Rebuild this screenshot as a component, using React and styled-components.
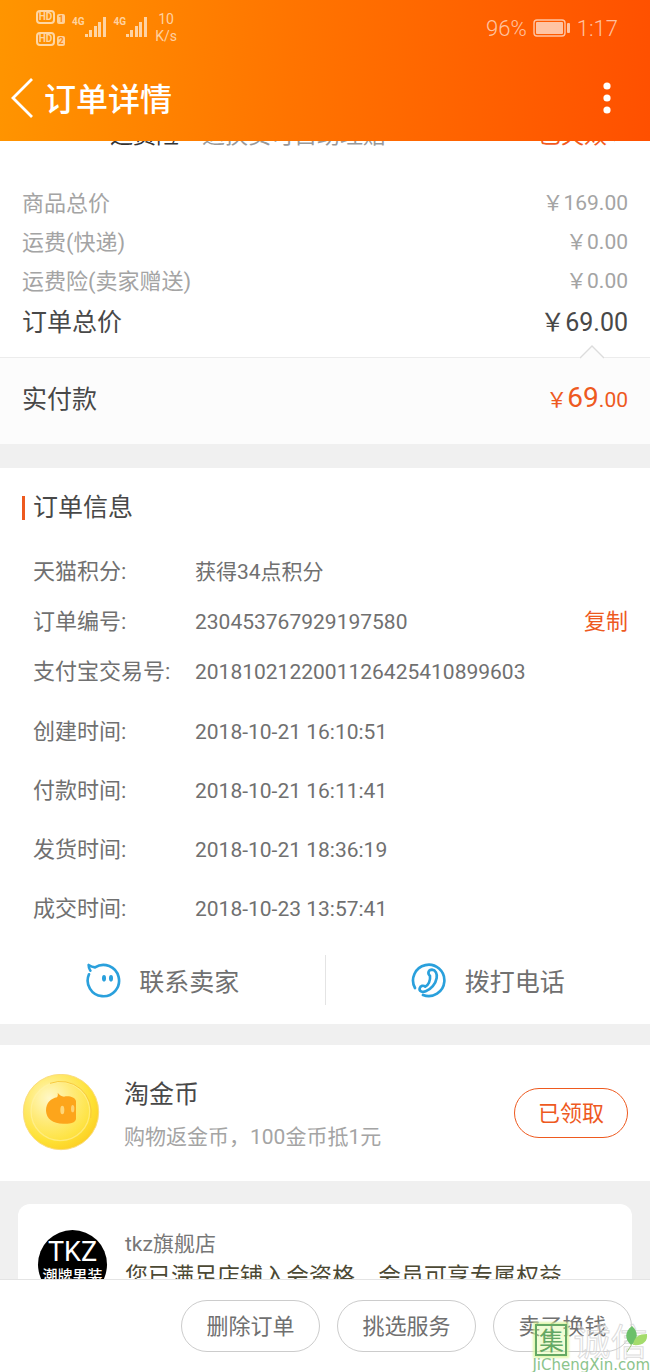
import React from 'react';
import styled, { createGlobalStyle } from 'styled-components';

const GlobalStyle = createGlobalStyle`
  * {
    box-sizing: border-box;
  }

  body {
    margin: 0;
    font-family: Roboto, "Noto Sans CJK SC", sans-serif;
    color: #484848;
    background: #f0f0f0;
  }

  button {
    font-family: inherit;
    cursor: pointer;
  }

  a {
    color: inherit;
    text-decoration: none;
  }
`;

const Page = styled.div`
  position: relative;
  height: 100vh;
  display: flex;
  flex-direction: column;
  overflow: hidden;
`;

const Header = styled.header`
  flex: none;
  background: linear-gradient(95deg, #ff9500 0%, #ff7400 45%, #ff5000 100%);
  color: #fff;
`;

const StatusBar = styled.div`
  height: 56px;
  padding: 0 32px 0 36px;
  display: flex;
  justify-content: space-between;
  align-items: center;
  color: rgba(255, 255, 255, 0.64);
`;

const StatusGroup = styled.div`
  display: flex;
  align-items: center;
  gap: ${props => props.$gap}px;
  font-size: 22px;
  font-weight: 300;
`;

const HdList = styled.div`
  display: flex;
  flex-direction: column;
  gap: 8px;
`;

const HdRow = styled.div`
  display: flex;
  align-items: flex-end;
  gap: 2px;
`;

const HdBadge = styled.span`
  width: 19px;
  height: 14px;
  border: 2px solid;
  border-radius: 4px;
  font-size: 10px;
  line-height: 10px;
  font-weight: 700;
  text-align: center;
`;

const SimBadge = styled.span`
  width: 8px;
  height: 10px;
  border-radius: 2px;
  background: rgba(255, 255, 255, 0.6);
  font-size: 9px;
  line-height: 10px;
  font-weight: 700;
  text-align: center;
  color: #ff8c10;
`;

const Signal = styled.div`
  display: flex;
  align-items: flex-start;
  font-size: 10px;
  line-height: 10px;
  font-weight: 700;
`;

const Speed = styled.div`
  font-size: 14px;
  line-height: 17px;
  font-weight: 400;
  text-align: center;
`;

const NavBar = styled.div`
  height: 85px;
  padding: 0 28px 0 8px;
  display: flex;
  align-items: center;
`;

const IconButton = styled.button`
  padding: 0;
  border: 0;
  background: none;
  display: flex;
`;

const NavTitle = styled.h1`
  flex: 1;
  margin: 0 0 0 8px;
  padding-top: 2px;
  font-size: 32px;
  line-height: 40px;
  font-weight: 500;
`;

const Content = styled.main`
  flex: 1;
  min-height: 0;
  overflow: hidden;
`;

const Section = styled.section`
  background: #fff;
  margin-bottom: ${props => props.$gap}px;
`;

const InsuranceRow = styled.div`
  height: 10px;
  padding: 0 28px 0 110px;
  overflow: hidden;
  display: flex;
  align-items: flex-end;
  font-size: 23px;
  line-height: 30px;
  color: #333;
`;

const InsuranceNote = styled.span`
  flex: 1;
  margin-left: 23px;
  color: #999;
`;

const InsuranceState = styled.span`
  display: flex;
  align-items: center;
  gap: 6px;
  color: #f25a1d;
`;

const Prices = styled.dl`
  margin: 0;
  padding: 33px 22px 12px;
`;

const PriceRow = styled.div`
  display: flex;
  justify-content: space-between;
  align-items: center;
  font-size: ${props => (props.$total ? 25 : 22)}px;
  line-height: ${props => (props.$total ? 44 : 39)}px;
  color: ${props => (props.$total ? '#484848' : '#a4a4a4')};
`;

const PriceValue = styled.dd`
  margin: 0;
  font-size: ${props => (props.$total ? 25 : 21)}px;
`;

const Paid = styled.div`
  position: relative;
  height: 87px;
  padding: 0 22px 8px;
  border-top: 1px solid #ececec;
  background: #fcfcfc;
  display: flex;
  justify-content: space-between;
  align-items: center;
  font-size: 25px;
`;

const PaidArrow = styled.svg`
  position: absolute;
  top: -13px;
  right: 46px;
`;

const PaidAmount = styled.strong`
  font-size: 21px;
  font-weight: 400;
  color: #ee5a1f;
`;

const PaidInteger = styled.span`
  font-size: 28px;
`;

const SectionTitle = styled.h2`
  margin: 0;
  padding: 26px 22px 26px;
  display: flex;
  align-items: center;
  gap: 8px;
  font-size: 25px;
  line-height: 27px;
  font-weight: 400;

  &::before {
    content: '';
    width: 3px;
    height: 24px;
    background: #ee5a1f;
  }
`;

const InfoList = styled.dl`
  margin: 0;
  padding: 0 22px 0 33px;

  & + & {
    padding-top: 5px;
  }
`;

const InfoRow = styled.div`
  height: ${props => props.$height}px;
  display: flex;
  align-items: center;
  line-height: 28px;
  color: #707070;
`;

const InfoLabel = styled.dt`
  width: 162px;
  font-size: 22px;
  white-space: nowrap;
`;

const InfoValue = styled.dd`
  flex: 1;
  margin: 0;
  font-size: 21px;
`;

const CopyButton = styled.button`
  padding: 0;
  border: 0;
  background: none;
  font-size: 22px;
  line-height: 28px;
  color: #ee5a1f;
`;

const Contacts = styled.div`
  height: 86px;
  padding-bottom: 2px;
  display: flex;
  align-items: center;
`;

const ContactLink = styled.a`
  flex: 1;
  height: 50px;
  display: flex;
  justify-content: center;
  align-items: center;
  gap: 18px;
  font-size: 25px;
  color: #707070;

  & + & {
    border-left: 1px solid #e4e4e4;
  }
`;

const CoinRow = styled.div`
  height: 136px;
  padding: 0 22px;
  display: flex;
  align-items: center;
  gap: 24px;
`;

const CoinText = styled.div`
  flex: 1;
  padding-top: 6px;
`;

const CoinName = styled.div`
  font-size: 25px;
  line-height: 42px;
`;

const CoinNote = styled.div`
  font-size: 21px;
  line-height: 42px;
  color: #a4a4a4;
`;

const PillButton = styled.button`
  min-width: ${props => (props.$accent ? 114 : 139)}px;
  height: ${props => (props.$accent ? 50 : 52)}px;
  padding: 0 20px 4px;
  border: 1px solid ${props => (props.$accent ? '#ee5a1f' : '#ccc')};
  border-radius: 26px;
  background: #fff;
  font-size: 22px;
  color: ${props => (props.$accent ? '#ee5a1f' : '#707070')};
`;

const ShopCard = styled.a`
  margin: 0 18px;
  padding: 26px 20px;
  border-radius: 12px;
  background: #fff;
  display: flex;
  gap: 18px;
`;

const ShopLogo = styled.div`
  flex: none;
  width: 69px;
  height: 69px;
  padding-top: 8px;
  border-radius: 50%;
  overflow: hidden;
  background: #000;
  color: #fff;
  text-align: center;
  font-size: 15px;
  line-height: 20px;
  font-weight: 500;
  white-space: nowrap;
`;

const ShopLogoName = styled.div`
  font-size: 27px;
  line-height: 28px;
  font-weight: 400;
`;

const ShopName = styled.div`
  font-size: 21px;
  line-height: 28px;
  color: #777;
`;

const ShopNote = styled.div`
  font-size: 23px;
  line-height: 38px;
  color: #4c4934;
`;

const Footer = styled.footer`
  flex: none;
  height: 93px;
  padding: 0 18px;
  border-top: 1px solid #e4e4e4;
  background: #fff;
  display: flex;
  justify-content: flex-end;
  align-items: center;
  gap: 17px;
`;

const Watermark = styled.div`
  position: absolute;
  right: 0;
  bottom: 0;
  pointer-events: none;
  font-family: "DejaVu Sans", sans-serif;
  font-size: 15px;
  line-height: 14px;
  color: #8cc48c;
`;

const WatermarkTop = styled.div`
  padding-left: 3px;
  display: flex;
  align-items: center;
  gap: 6px;
  font-family: "Noto Sans CJK SC", sans-serif;
  font-size: 37px;
  line-height: 36px;
`;

const WatermarkSeal = styled.span`
  width: 32px;
  height: 32px;
  border: 2px solid #64a864;
  box-shadow: 0 0 2px 2px rgba(217, 245, 154, 0.8);
  background: rgba(217, 250, 150, 0.4);
  font-size: 25px;
  line-height: 26px;
  text-align: center;
  color: #64a864;
`;

const WatermarkName = styled.span`
  color: rgba(255, 255, 255, 0.3);
  -webkit-text-stroke: 1px rgba(205, 205, 205, 0.7);
`;

const WatermarkLeaf = styled.svg`
  position: absolute;
  top: 3px;
  right: 1px;
`;

const SignalBars = () => (
  <svg width="22" height="22" viewBox="0 0 22 22" fill="currentColor">
    <rect x="0" y="17" width="3" height="3" />
    <rect x="4" y="13" width="3" height="7" />
    <rect x="9" y="9" width="3" height="11" />
    <rect x="13" y="5" width="3" height="15" />
    <rect x="18" y="0" width="3" height="20" />
  </svg>
);

const BatteryIcon = () => (
  <svg width="38" height="18" viewBox="0 0 38 18">
    <rect x="1" y="1" width="31" height="16" rx="3" fill="none" stroke="currentColor" strokeWidth="1.4" />
    <rect x="3" y="3" width="27" height="12" rx="1" fill="currentColor" />
    <rect x="34" y="4" width="3" height="10" rx="1" fill="currentColor" />
  </svg>
);

const BackIcon = () => (
  <svg width="28" height="42" viewBox="0 0 28 42" fill="none" stroke="#fff" strokeWidth="2.8">
    <path d="M24 1L5 20l19 19" />
  </svg>
);

const MoreIcon = () => (
  <svg width="30" height="36" viewBox="0 0 30 36" fill="#fff">
    <circle cx="15" cy="5" r="3.6" />
    <circle cx="15" cy="17" r="3.6" />
    <circle cx="15" cy="29" r="3.6" />
  </svg>
);

const WangwangIcon = () => (
  <svg width="36" height="36" viewBox="0 0 108 108" fill="none" stroke="#2aa0dc" strokeWidth="8" strokeLinecap="round" strokeLinejoin="round">
    <path d="M12 37A47 47 0 1 0 30 16Q20 15 11 9Q11 18 16 26" />
    <ellipse cx="57" cy="49" rx="6" ry="10" fill="#2aa0dc" stroke="none" />
    <ellipse cx="78" cy="49" rx="6" ry="10" fill="#2aa0dc" stroke="none" />
  </svg>
);

const PhoneIcon = () => (
  <svg width="36" height="36" viewBox="0 0 108 108" fill="none" stroke="#2aa0dc" strokeWidth="8" strokeLinecap="round" strokeLinejoin="round">
    <path d="M12 78A47 47 0 1 1 36 99" />
    <path d="M57 42C48 34 53 23 63 23C74 24 79 35 77 48C74 66 60 82 44 88C33 92 24 87 26 79C28 71 37 69 43 74C52 69 59 56 57 42Z" />
  </svg>
);

const CoinIcon = () => (
  <svg width="78" height="78" viewBox="0 0 234 234">
    <defs>
      <radialGradient id="coin" cx="0.35" cy="0.32" r="0.75">
        <stop offset="0" stopColor="#fff8c4" />
        <stop offset="0.4" stopColor="#ffea70" />
        <stop offset="0.75" stopColor="#fee134" />
        <stop offset="1" stopColor="#fcce24" />
      </radialGradient>
    </defs>
    <circle cx="117" cy="114" r="113" fill="url(#coin)" stroke="#fbdc7c" strokeWidth="3" />
    <circle cx="115" cy="112" r="88" fill="#fff" fillOpacity="0.08" stroke="#fff6b0" strokeWidth="4" strokeOpacity="0.5" />
    <path d="M84 28A92 92 0 0 1 206 132" fill="none" stroke="#f8ca3c" strokeWidth="3" />
    <path d="M107 56C112 63 118 67 126 68C142 65 158 69 162 81V135C160 148 140 150 124 149C93 149 73 134 72 110C72 86 88 73 105 70C108 65 108 61 107 56Z" fill="#fda51b" />
    <ellipse cx="121" cy="108" rx="6" ry="13" fill="#fed678" />
    <ellipse cx="152" cy="104" rx="5" ry="11" fill="#fed070" />
  </svg>
);

const PRICES = [
  { label: '商品总价', value: '￥169.00' },
  { label: '运费(快递)', value: '￥0.00' },
  { label: '运费险(卖家赠送)', value: '￥0.00' },
  { label: '订单总价', value: '￥69.00', total: true },
];

const NUMBERS = [
  { label: '天猫积分:', value: '获得34点积分' },
  { label: '订单编号:', value: '230453767929197580', copy: true },
  { label: '支付宝交易号:', value: '2018102122001126425410899603' },
];

const TIMES = [
  { label: '创建时间:', value: '2018-10-21 16:10:51' },
  { label: '付款时间:', value: '2018-10-21 16:11:41' },
  { label: '发货时间:', value: '2018-10-21 18:36:19' },
  { label: '成交时间:', value: '2018-10-23 13:57:41' },
];

const Info = ({ rows, height }) => (
  <InfoList>
    {rows.map(row => (
      <InfoRow key={row.label} $height={height}>
        <InfoLabel>{row.label}</InfoLabel>
        <InfoValue>{row.value}</InfoValue>
        {row.copy && <CopyButton type="button">复制</CopyButton>}
      </InfoRow>
    ))}
  </InfoList>
);

const App = () => (
  <Page>
    <GlobalStyle />
    <Header>
      <StatusBar>
        <StatusGroup $gap={7}>
          <HdList>
            <HdRow><HdBadge>HD</HdBadge><SimBadge>1</SimBadge></HdRow>
            <HdRow><HdBadge>HD</HdBadge><SimBadge>2</SimBadge></HdRow>
          </HdList>
          <Signal>4G<SignalBars /></Signal>
          <Signal>4G<SignalBars /></Signal>
          <Speed>10<br />K/s</Speed>
        </StatusGroup>
        <StatusGroup $gap={6}>
          <span>96%</span>
          <BatteryIcon />
          <span>1:17</span>
        </StatusGroup>
      </StatusBar>
      <NavBar>
        <IconButton type="button" aria-label="返回"><BackIcon /></IconButton>
        <NavTitle>订单详情</NavTitle>
        <IconButton type="button" aria-label="更多"><MoreIcon /></IconButton>
      </NavBar>
    </Header>
    <Content>
      <Section $gap={24}>
        <InsuranceRow>
          <span>运费险</span>
          <InsuranceNote>退换货可自助理赔</InsuranceNote>
          <InsuranceState>
            已失效
            <svg width="9" height="16" viewBox="0 0 9 16" fill="none" stroke="#bbb" strokeWidth="1.5">
              <path d="M1 1l6 6-6 6" />
            </svg>
          </InsuranceState>
        </InsuranceRow>
        <Prices>
          {PRICES.map(row => (
            <PriceRow key={row.label} $total={row.total}>
              <dt>{row.label}</dt>
              <PriceValue $total={row.total}>{row.value}</PriceValue>
            </PriceRow>
          ))}
        </Prices>
        <Paid>
          <PaidArrow width="24" height="14" viewBox="0 0 24 14">
            <path d="M0 13L12 1l12 12v1H0z" fill="#fcfcfc" />
            <path d="M0 13L12 1l12 12" fill="none" stroke="#dcdcdc" strokeWidth="1.4" />
          </PaidArrow>
          <span>实付款</span>
          <PaidAmount>￥<PaidInteger>69</PaidInteger>.00</PaidAmount>
        </Paid>
      </Section>
      <Section $gap={21}>
        <SectionTitle>订单信息</SectionTitle>
        <Info rows={NUMBERS} height={50} />
        <Info rows={TIMES} height={59} />
        <Contacts>
          <ContactLink href="#seller"><WangwangIcon />联系卖家</ContactLink>
          <ContactLink href="#phone"><PhoneIcon />拨打电话</ContactLink>
        </Contacts>
      </Section>
      <Section $gap={23}>
        <CoinRow>
          <CoinIcon />
          <CoinText>
            <CoinName>淘金币</CoinName>
            <CoinNote>购物返金币，100金币抵1元</CoinNote>
          </CoinText>
          <PillButton type="button" $accent>已领取</PillButton>
        </CoinRow>
      </Section>
      <ShopCard href="#shop">
        <ShopLogo>
          <ShopLogoName>TKZ</ShopLogoName>
          潮牌男装
        </ShopLogo>
        <div>
          <ShopName>tkz旗舰店</ShopName>
          <ShopNote>您已满足店铺入会资格，会员可享专属权益</ShopNote>
        </div>
      </ShopCard>
    </Content>
    <Footer>
      <PillButton type="button">删除订单</PillButton>
      <PillButton type="button">挑选服务</PillButton>
      <PillButton type="button">卖了换钱</PillButton>
    </Footer>
    <Watermark>
      <WatermarkTop>
        <WatermarkSeal>集</WatermarkSeal>
        <WatermarkName>诚信</WatermarkName>
      </WatermarkTop>
      <WatermarkLeaf width="24" height="28" viewBox="0 0 24 28">
        <path d="M7 1C0 6-1 14 6 20C13 16 14 7 7 1Z" fill="#6cc06a" />
        <path d="M8 20C9 12 14 9 22 9C23 17 17 21 8 20Z" fill="#a4dc6c" />
        <path d="M7 19L2 27" stroke="#a4c87c" fill="none" />
      </WatermarkLeaf>
      JiChengXin.com
    </Watermark>
  </Page>
);

export default App;
